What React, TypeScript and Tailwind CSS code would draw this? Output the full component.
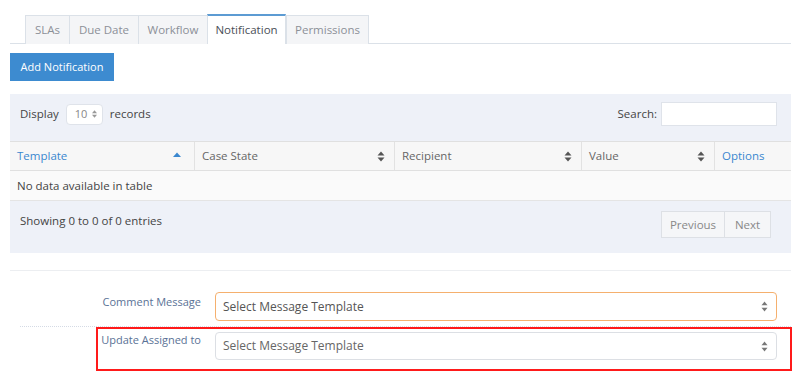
import React from 'react';

const tabs = [
  { name: 'SLAs', width: 'w-[44px]' },
  { name: 'Due Date', width: 'w-[69px]' },
  { name: 'Workflow', width: 'w-[69px]' },
  { name: 'Notification', width: 'w-[79px]' },
  { name: 'Permissions', width: 'w-[83px]' },
];

const columns = [
  { name: 'Template', width: 'w-[185px]', sort: 'asc' },
  { name: 'Case State', width: 'w-[200px]', sort: 'both' },
  { name: 'Recipient', width: 'w-[187px]', sort: 'both' },
  { name: 'Value', width: 'w-[133px]', sort: 'both' },
  { name: 'Options', width: 'flex-1', sort: 'none' },
];

const SortIcon: React.FC<{ kind: string }> = ({ kind }) => {
  if (kind === 'asc') {
    return (
      <svg width="8" height="6" viewBox="0 0 8 6" className="mr-[4px] mb-[3px]">
        <path d="M0 5 L4 0.5 L8 5 Z" fill="#3a87cf" />
      </svg>
    );
  }
  if (kind === 'both') {
    return (
      <svg width="8" height="11" viewBox="0 0 8 11">
        <path d="M0.5 4.5 L4 0.5 L7.5 4.5 Z" fill="#555" />
        <path d="M0.5 6.5 L4 10.5 L7.5 6.5 Z" fill="#555" />
      </svg>
    );
  }
  return null;
};

const SelectArrows: React.FC = () => (
  <svg width="7" height="11" viewBox="0 0 7 11">
    <path d="M0.5 4.3 L3.5 0.5 L6.5 4.3 Z" fill="#777" />
    <path d="M0.5 6.7 L3.5 10.5 L6.5 6.7 Z" fill="#777" />
  </svg>
);

const App: React.FC = () => {
  return (
    <div
      className="relative w-[800px] h-[386px] bg-white overflow-hidden text-[11.5px] text-[#555]"
      style={{ fontFamily: '"Open Sans", "Liberation Sans", sans-serif' }}
    >
      <div className="pl-[10px] pt-[14px] w-[791px]">
        {/* Tabs */}
        <div className="flex pl-[15px] border-b border-[#dbe1e8] h-[30px]">
          {tabs.map((t) => {
            const active = t.name === 'Notification';
            return (
              <div
                key={t.name}
                className={
                  active
                    ? `${t.width} h-[30px] flex items-center justify-center bg-white border-x border-[#dbe1e8] border-t-2 border-t-[#5c9bd3] text-[#4a4f57] mb-[-1px]`
                    : `${t.width} h-[29px] flex items-center justify-center bg-[#f4f5f7] border-l border-t border-[#dbe1e8] text-[#8c9097] mt-[1px] last:border-r`
                }
              >
                {t.name}
              </div>
            );
          })}
        </div>

        {/* Add button */}
        <button className="mt-[9px] h-[28px] w-[104px] bg-[#3d8bd0] text-white text-[11px] flex items-center justify-center">
          Add Notification
        </button>

        {/* Datatable panel */}
        <div className="mt-[13px] bg-[#eef1f8] h-[159px]">
          <div className="flex items-center justify-between h-[47px] pl-[10px] pr-[14px] pb-[7px]">
            <div className="flex items-center gap-[7px]">
              <span className="text-[#444]">Display</span>
              <div className="h-[21px] w-[37px] bg-white border border-[#dfe3ea] rounded-[4px] flex items-center justify-between pl-[8px] pr-[5px] text-[#888] text-[11px]">
                <span>10</span>
                <svg width="5" height="8" viewBox="0 0 5 8">
                  <path d="M0 3.2 L2.5 0.3 L5 3.2 Z" fill="#999" />
                  <path d="M0 4.8 L2.5 7.7 L5 4.8 Z" fill="#999" />
                </svg>
              </div>
              <span className="text-[#444]">records</span>
            </div>
            <div className="flex items-center gap-[4px]">
              <span className="text-[#444]">Search:</span>
              <div className="h-[24px] w-[116px] bg-white border border-[#dfe3ea]" />
            </div>
          </div>

          {/* Table */}
          <div className="flex h-[30px] bg-[#f7f7f7] border-y border-[#e0e0e0]">
            {columns.map((c) => (
              <div
                key={c.name}
                className={`${c.width} flex items-center justify-between pl-[7px] pr-[9px] border-r border-[#e2e2e2] last:border-r-0 ${
                  c.name === 'Template' || c.name === 'Options' ? 'text-[#3a87cf]' : 'text-[#666]'
                }`}
              >
                <span>{c.name}</span>
                <SortIcon kind={c.sort} />
              </div>
            ))}
          </div>
          <div className="h-[30px] bg-[#fafafa] border-b border-[#e4e4e4] flex items-center pl-[7px] text-[#444]">
            No data available in table
          </div>

          <div className="flex items-start justify-between pl-[10px] pr-[20px] pt-[10px]">
            <span className="text-[#444] mt-[1px]">Showing 0 to 0 of 0 entries</span>
            <div className="flex border border-[#dde0e5] bg-[#f5f6f8] h-[27px]">
              <div className="w-[63px] flex items-center justify-center border-r border-[#dde0e5] text-[#888]">Previous</div>
              <div className="w-[45px] flex items-center justify-center text-[#888]">Next</div>
            </div>
          </div>
        </div>

        {/* Separator */}
        <div className="mt-[17px] border-t border-[#eceef1]" />

        {/* Form rows */}
        <div className="mt-[21px] flex items-start">
          <div className="w-[191px] text-right text-[11px] text-[#5a7296] mt-[2px]">Comment Message</div>
          <div className="ml-[14px] w-[562px] h-[29px] rounded-[4px] border border-[#f5b06e] flex items-center justify-between pl-[7px] pr-[8px] text-[12px] text-[#555]">
            <span>Select Message Template</span>
            <SelectArrows />
          </div>
        </div>
        <div className="mt-[5px] ml-[10px] border-t border-dotted border-[#d5dbe5]" />
        <div className="mt-[5px] flex items-start">
          <div className="w-[191px] text-right text-[11px] text-[#5a7296] mt-[0px]">Update Assigned to</div>
          <div className="ml-[14px] w-[562px] h-[28px] rounded-[4px] border border-[#dcdfe4] flex items-center justify-between pl-[7px] pr-[8px] text-[12px] text-[#666]">
            <span>Select Message Template</span>
            <SelectArrows />
          </div>
        </div>
      </div>

      {/* Annotation highlight */}
      <div className="absolute left-[96px] top-[327px] w-[696px] h-[44px] border-2 border-[#ff1a1a]" />
    </div>
  );
};

export default App;
